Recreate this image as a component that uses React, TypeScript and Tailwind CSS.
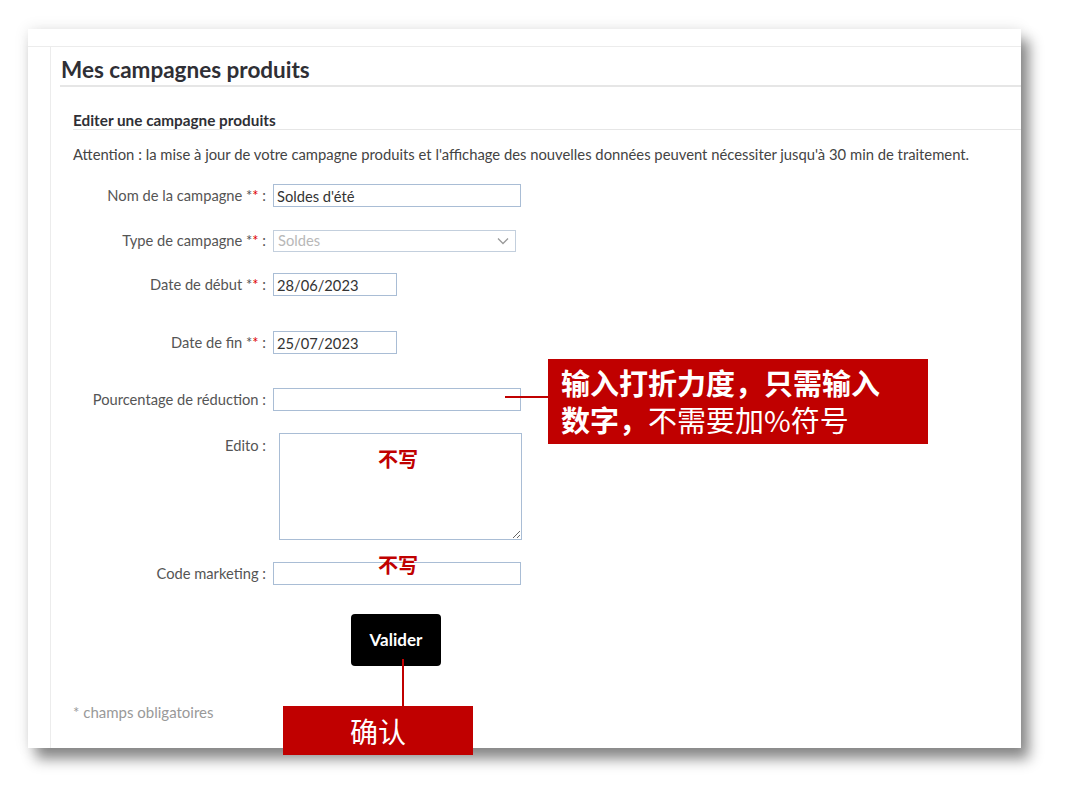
import React from "react";

const font = { fontFamily: "Lato, 'Open Sans', 'Noto Sans', sans-serif" };
const cjk = { fontFamily: "'Noto Sans CJK SC', 'Noto Sans', sans-serif" };

function Req() {
  return (
    <>
      {" "}*<span className="text-[#e00000]">*</span>&nbsp;:
    </>
  );
}

function Row({
  label,
  children,
  mt,
  top = false,
}: {
  label: React.ReactNode;
  children: React.ReactNode;
  mt: string;
  top?: boolean;
}) {
  return (
    <div className={`flex ${top ? "items-start" : "items-center"} ${mt}`}>
      <div
        className={`w-[193px] shrink-0 text-right text-[14.7px] leading-[23px] text-[#555] ${top ? "pt-[1px]" : ""}`}
      >
        {label}
      </div>
      <div className="ml-[7px]">{children}</div>
    </div>
  );
}

const inputCls =
  "block h-[23px] border border-[#a9bdd5] px-[3px] text-[14.7px] text-[#333] outline-none bg-white";

export default function App() {
  return (
    <div className="relative min-h-[807px] w-[1080px] bg-white" style={font}>
      <div className="ml-[28px] pt-[29px]">
        <div className="h-[719px] w-[993px] bg-white shadow-[8px_11px_13px_rgba(0,0,0,0.45),0_0_14px_rgba(0,0,0,0.1)] flex flex-col">
          <div className="h-[18px] border-b border-[#ececec]" />
          <div className="flex flex-1">
            <div className="w-[23px] border-r border-[#ececec]" />
            <div className="flex-1 pl-[9px]">
              <div className="border-b-2 border-[#e6e6e6] pt-[10px] pb-[2px]">
                <h1 className="text-[22.5px] font-bold leading-[26px] text-[#2f2f35] pl-[1px]">
                  Mes campagnes produits
                </h1>
              </div>
              <div className="pl-[13px]">
                <div className="mt-[24px] border-b border-[#e6e6e6]">
                  <h2 className="text-[15.3px] font-bold leading-[18px] text-[#2f2f35]">
                    Editer une campagne produits
                  </h2>
                </div>
                <p className="mt-[14px] text-[14.8px] leading-[20px] text-[#444]">
                  Attention : la mise à jour de votre campagne produits et l'affichage des
                  nouvelles données peuvent nécessiter jusqu'à 30 min de traitement.
                </p>

                <Row label={<>Nom de la campagne<Req /></>} mt="mt-[20px]">
                  <input className={`${inputCls} w-[248px]`} defaultValue="Soldes d'été" />
                </Row>

                <Row label={<>Type de campagne<Req /></>} mt="mt-[22px]">
                  <div className="flex h-[22px] w-[243px] items-center justify-between border border-[#c3cfdd] px-[4px] text-[14.7px] text-[#b8b8b8]">
                    <span>Soldes</span>
                    <svg width="12" height="8" viewBox="0 0 12 8" className="mr-[2px]">
                      <path d="M1 1.5 L6 6.5 L11 1.5" fill="none" stroke="#9a9a9a" strokeWidth="1.3" />
                    </svg>
                  </div>
                </Row>

                <Row label={<>Date de début<Req /></>} mt="mt-[21px]">
                  <input className={`${inputCls} w-[124px]`} defaultValue="28/06/2023" />
                </Row>

                <Row label={<>Date de fin<Req /></>} mt="mt-[35px]">
                  <input className={`${inputCls} w-[124px]`} defaultValue="25/07/2023" />
                </Row>

                <Row label="Pourcentage de réduction :" mt="mt-[34px]">
                  <input className={`${inputCls} w-[248px]`} />
                </Row>

                <Row label="Edito :" mt="mt-[22px]" top>
                  <textarea className="ml-[6px] block h-[107px] w-[243px] border border-[#a9bdd5] text-[14px] outline-none" />
                </Row>

                <Row label="Code marketing :" mt="mt-[22px]">
                  <input className={`${inputCls} w-[248px]`} />
                </Row>

                <div className="mt-[29px] flex">
                  <button className="ml-[278px] h-[52px] w-[90px] rounded-[4px] bg-black text-[17px] font-bold text-white">
                    Valider
                  </button>
                </div>

                <p className="mt-[36px] text-[15px] leading-[20px] text-[#999]">* champs obligatoires</p>
              </div>
            </div>
          </div>
        </div>
      </div>

      {/* annotations */}
      <div className="absolute left-[505px] top-[396px] h-[2px] w-[44px] bg-[#c00000]" />
      <div
        className="absolute left-[548px] top-[359px] h-[85px] w-[380px] bg-[#c00000] pl-[13px] pt-[5px] text-[29px] leading-[37px] text-white"
        style={cjk}
      >
        <div className="font-bold">输入打折力度，只需输入</div>
        <div>
          <span className="font-bold">数字，</span>不需要加%符号
        </div>
      </div>

      <div
        className="absolute left-[378px] top-[446px] text-[20px] font-bold leading-[26px] text-[#c00000]"
        style={cjk}
      >
        不写
      </div>
      <div
        className="absolute left-[378px] top-[552px] text-[20px] font-bold leading-[26px] text-[#c00000]"
        style={cjk}
      >
        不写
      </div>

      <div className="absolute left-[402px] top-[659px] h-[47px] w-[2px] bg-[#c00000]" />
      <div
        className="absolute left-[283px] top-[706px] flex h-[49px] w-[190px] items-center justify-center bg-[#c00000] text-[28px] text-white"
        style={cjk}
      >
        确认
      </div>
    </div>
  );
}
